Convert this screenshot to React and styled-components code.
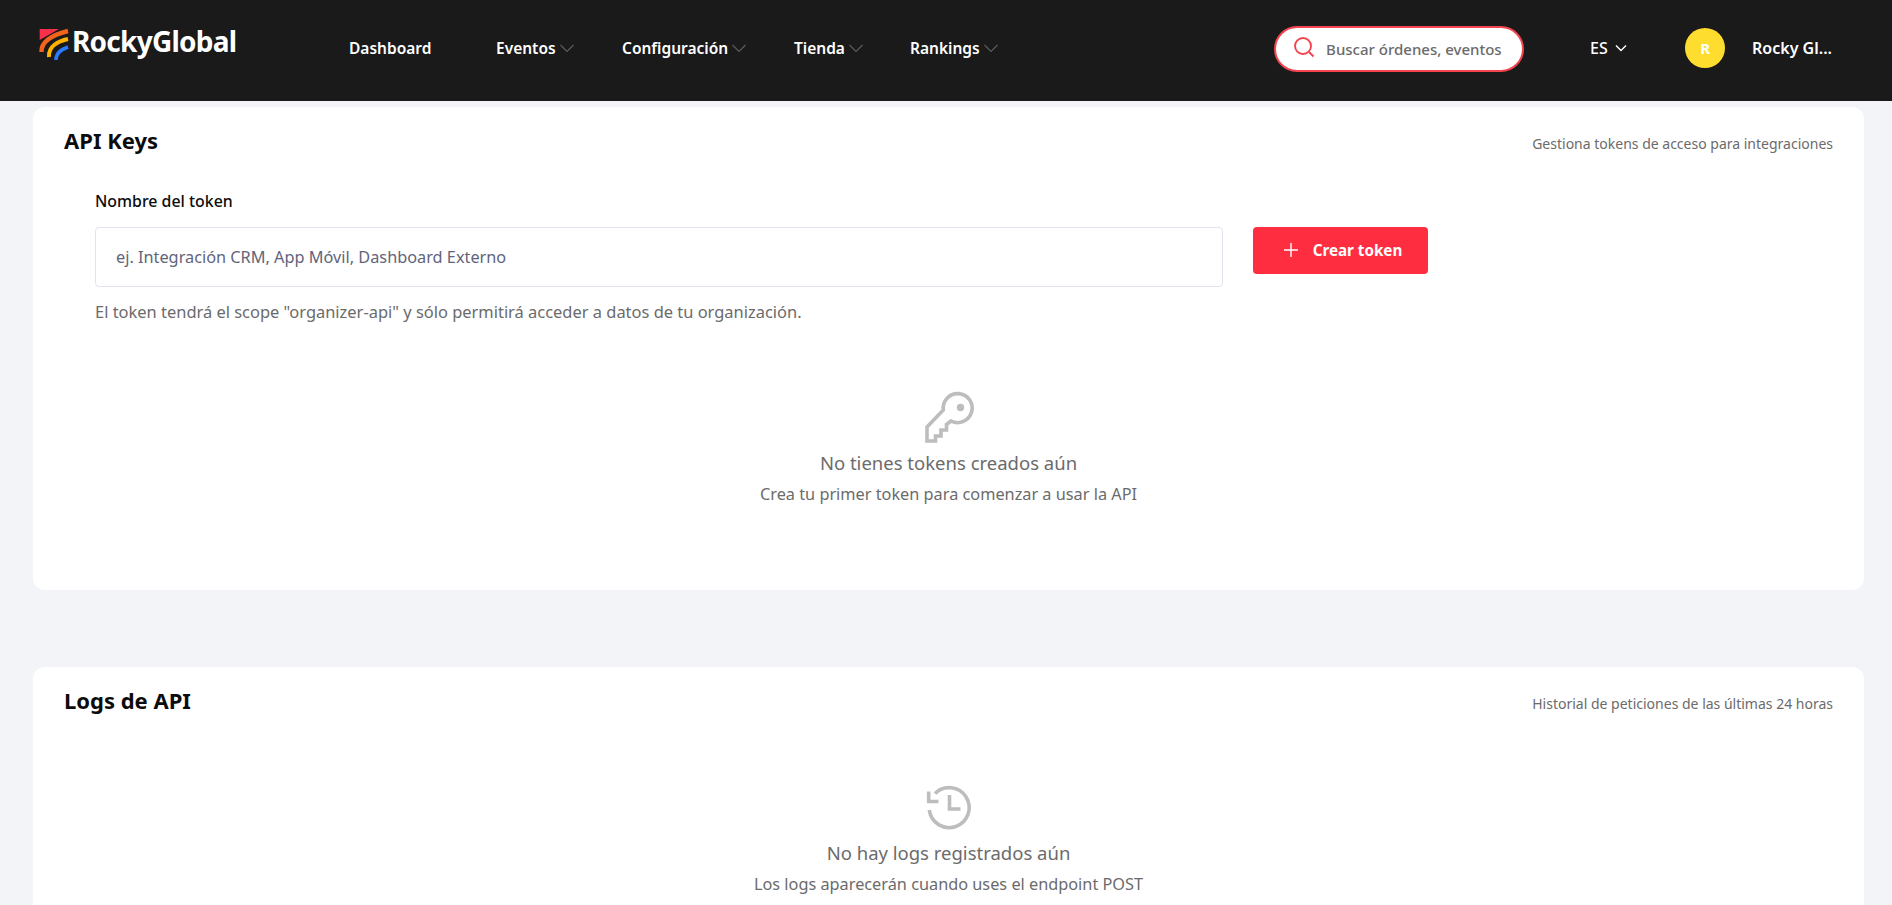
import React from "react";
import styled, { createGlobalStyle } from "styled-components";

const Global = createGlobalStyle`
  html, body { margin: 0; padding: 0; height: 100%; overflow: hidden; background: #f3f4f7; }
  body { font-family: "Noto Sans", "Open Sans", sans-serif; }
  * { box-sizing: border-box; }
`;
const Page = styled.div`height: 905px; overflow: hidden; display: flex; flex-direction: column;`;
const Header = styled.header`
  height: 101px; flex: none; background: #1a1a1a; color: #fff;
  display: flex; align-items: center; padding: 0 60px 5px 37px;
`;
const Logo = styled.div`display: flex; align-items: center; width: 312px; flex: none; margin-top: -7px;`;
const LogoMark = styled.svg`width: 35px; height: 36px; flex: none; margin-top: 3px;`;
const LogoText = styled.span`font-size: 28px; font-weight: 700; letter-spacing: -0.75px; line-height: 34px; margin-bottom: 7px;`;
const Nav = styled.nav`display: flex; align-items: center; flex: none;`;
const NavItem = styled.div`
  display: flex; align-items: center; gap: 3px; font-size: 15.5px; font-weight: 600;
  width: ${p => p.$w}px; white-space: nowrap;
`;
const Chevron = styled.svg`width: 16px; height: 16px; flex: none; color: ${p => p.$c || "#5c5c5c"};`;
const Search = styled.div`
  margin-left: auto; margin-top: 2px; width: 250px; height: 46px; border-radius: 23px; border: 2px solid #f4444f; background: #fff;
  display: flex; align-items: center; padding: 0 18px 0 16px; gap: 10px; flex: none;
  font-size: 15px; font-weight: 500; color: #6b6b6b; white-space: nowrap; overflow: hidden;
`;
const SearchIcon = styled.svg`width: 24px; height: 24px; flex: none; color: #f4444f; margin-top: -4px;`;
const Lang = styled.div`
  margin-left: 66px; display: flex; align-items: center; gap: 5px; font-size: 16px; font-weight: 500; width: 95px; flex: none;
`;
const Avatar = styled.div`
  width: 40px; height: 40px; border-radius: 50%; background: #ffdd2e; color: #fff; font-weight: 700; font-size: 15px;
  display: flex; align-items: center; justify-content: center; flex: none;
`;
const UserName = styled.div`margin-left: 27px; font-size: 16px; font-weight: 600; white-space: nowrap;`;
const Main = styled.main`padding: 6px 28px 0 33px; display: flex; flex-direction: column; gap: 77px;`;
const Card = styled.section`background: #fff; border-radius: 12px; padding: 19px 31px 0; flex: none; height: ${p => p.$h}px;`;
const CardHead = styled.div`display: flex; justify-content: space-between; align-items: center; height: 28px;`;
const Title = styled.h2`margin: 0; font-size: 22px; font-weight: 700; color: #0c0c0c; line-height: 28px;`;
const Meta = styled.span`font-size: 14px; color: #6b6b6b; margin-top: 6px;`;
const Form = styled.div`padding: 35px 0 0 31px;`;
const Label = styled.label`display: block; font-size: 15.9px; font-weight: 500; color: #0c0c0c; line-height: 24px; margin-bottom: 14px;`;
const Row = styled.div`display: flex; align-items: flex-start; gap: 30px;`;
const Input = styled.div`
  width: 1128px; height: 60px; border: 1px solid #e2e3ee; border-radius: 4px; display: flex; align-items: center;
  padding-left: 20px; font-size: 16.3px; color: #62647a; flex: none;
`;
const Button = styled.button`
  width: 175px; height: 47px; border: none; border-radius: 4px; background: #ff2d40; color: #fff; font: inherit; font-size: 15.2px; font-weight: 700;
  display: flex; align-items: center; justify-content: center; gap: 10px; flex: none; padding: 0 0 2px;
`;
const PlusIcon = styled.svg`width: 24px; height: 24px; flex: none;`;
const Help = styled.p`margin: 14px 0 0; font-size: 16.45px; color: #6b6b6b; line-height: 22px;`;
const Empty = styled.div`display: flex; flex-direction: column; align-items: center; margin-top: ${p => p.$mt}px;`;
const EmptyIcon = styled.svg`width: 66px; height: 60px; color: #bdbdbd; display: block;`;
const EmptyTitle = styled.div`font-size: 18.5px; color: #6b6b6b; line-height: 26px; margin-top: ${p => p.$mt}px;`;
const EmptySub = styled.div`font-size: 16.3px; color: #6b6b6b; line-height: 22px; margin-top: 7px;`;

const Down = ({ c }) => (
  <Chevron $c={c} viewBox="0 0 16 16" fill="none" stroke="currentColor" strokeWidth="1.2"><path d="M1.5 5 8 11.5 14.5 5" /></Chevron>
);

export default function App() {
  return (
    <Page>
      <Global />
      <Header>
        <Logo>
          <LogoMark viewBox="7 9 31 36" fill="none">
            <polygon points="7.7,10 27,10 7.7,21" fill="#f9304a" />
            <path d="M36 12 C24 15 9 21 9.5 33" stroke="#f2631c" strokeWidth="4.4" />
            <path d="M36 20 C27 22 16 27 17 38" stroke="#ffb300" strokeWidth="4" />
            <path d="M36 28 C31 30 24 33 24 41" stroke="#2a7bff" strokeWidth="3.6" />
          </LogoMark>
          <LogoText>RockyGlobal</LogoText>
        </Logo>
        <Nav>
          <NavItem $w={147}>Dashboard</NavItem>
          <NavItem $w={126}>Eventos<Down /></NavItem>
          <NavItem $w={172}>Configuración<Down /></NavItem>
          <NavItem $w={116}>Tienda<Down /></NavItem>
          <NavItem $w={100}>Rankings<Down /></NavItem>
        </Nav>
        <Search>
          <SearchIcon viewBox="0 0 24 24" fill="none" stroke="currentColor" strokeWidth="1.9"><circle cx="11" cy="11" r="8" /><path d="M17 17l4.5 4.5" /></SearchIcon>
          Buscar órdenes, eventos
        </Search>
        <Lang>ES<Chevron $c="#fff" viewBox="0 0 16 16" fill="none" stroke="currentColor" strokeWidth="1.4"><path d="M3 5.5 8 10.5 13 5.5" /></Chevron></Lang>
        <Avatar>R</Avatar>
        <UserName>Rocky Gl...</UserName>
      </Header>
      <Main>
        <Card $h={483}>
          <CardHead><Title>API Keys</Title><Meta>Gestiona tokens de acceso para integraciones</Meta></CardHead>
          <Form>
            <Label>Nombre del token</Label>
            <Row>
              <Input>ej. Integración CRM, App Móvil, Dashboard Externo</Input>
              <Button><PlusIcon viewBox="0 0 24 24" fill="none" stroke="currentColor" strokeWidth="1.4"><path d="M12 5v14M5 12h14" /></PlusIcon>Crear token</Button>
            </Row>
            <Help>El token tendrá el scope "organizer-api" y sólo permitirá acceder a datos de tu organización.</Help>
          </Form>
          <Empty $mt={64}>
            <EmptyIcon viewBox="0 0 66 60" fill="none" stroke="currentColor" strokeWidth="3.6">
              <path d="M27.3 23 L11 40 V54 H19.5 V49 H25 V43 H30.5 V37.5 L35 34 A14.5 14.5 0 1 0 27.3 23 Z" />
              <circle cx="44.5" cy="20.5" r="3.7" fill="currentColor" stroke="none" />
            </EmptyIcon>
            <EmptyTitle $mt={3}>No tienes tokens creados aún</EmptyTitle>
            <EmptySub>Crea tu primer token para comenzar a usar la API</EmptySub>
          </Empty>
        </Card>
        <Card $h={400}>
          <CardHead><Title>Logs de API</Title><Meta>Historial de peticiones de las últimas 24 horas</Meta></CardHead>
          <Empty $mt={63}>
            <EmptyIcon viewBox="0 0 66 60" fill="none" stroke="currentColor" strokeWidth="3.6">
              <path d="M13.3 33 A20 20 0 1 0 19 16.5" />
              <path d="M12.7 14.5 V24.5 H22.5" />
              <path d="M33.5 18 V32 H44.5" />
            </EmptyIcon>
            <EmptyTitle $mt={3}>No hay logs registrados aún</EmptyTitle>
            <EmptySub>Los logs aparecerán cuando uses el endpoint POST</EmptySub>
          </Empty>
        </Card>
      </Main>
    </Page>
  );
}
